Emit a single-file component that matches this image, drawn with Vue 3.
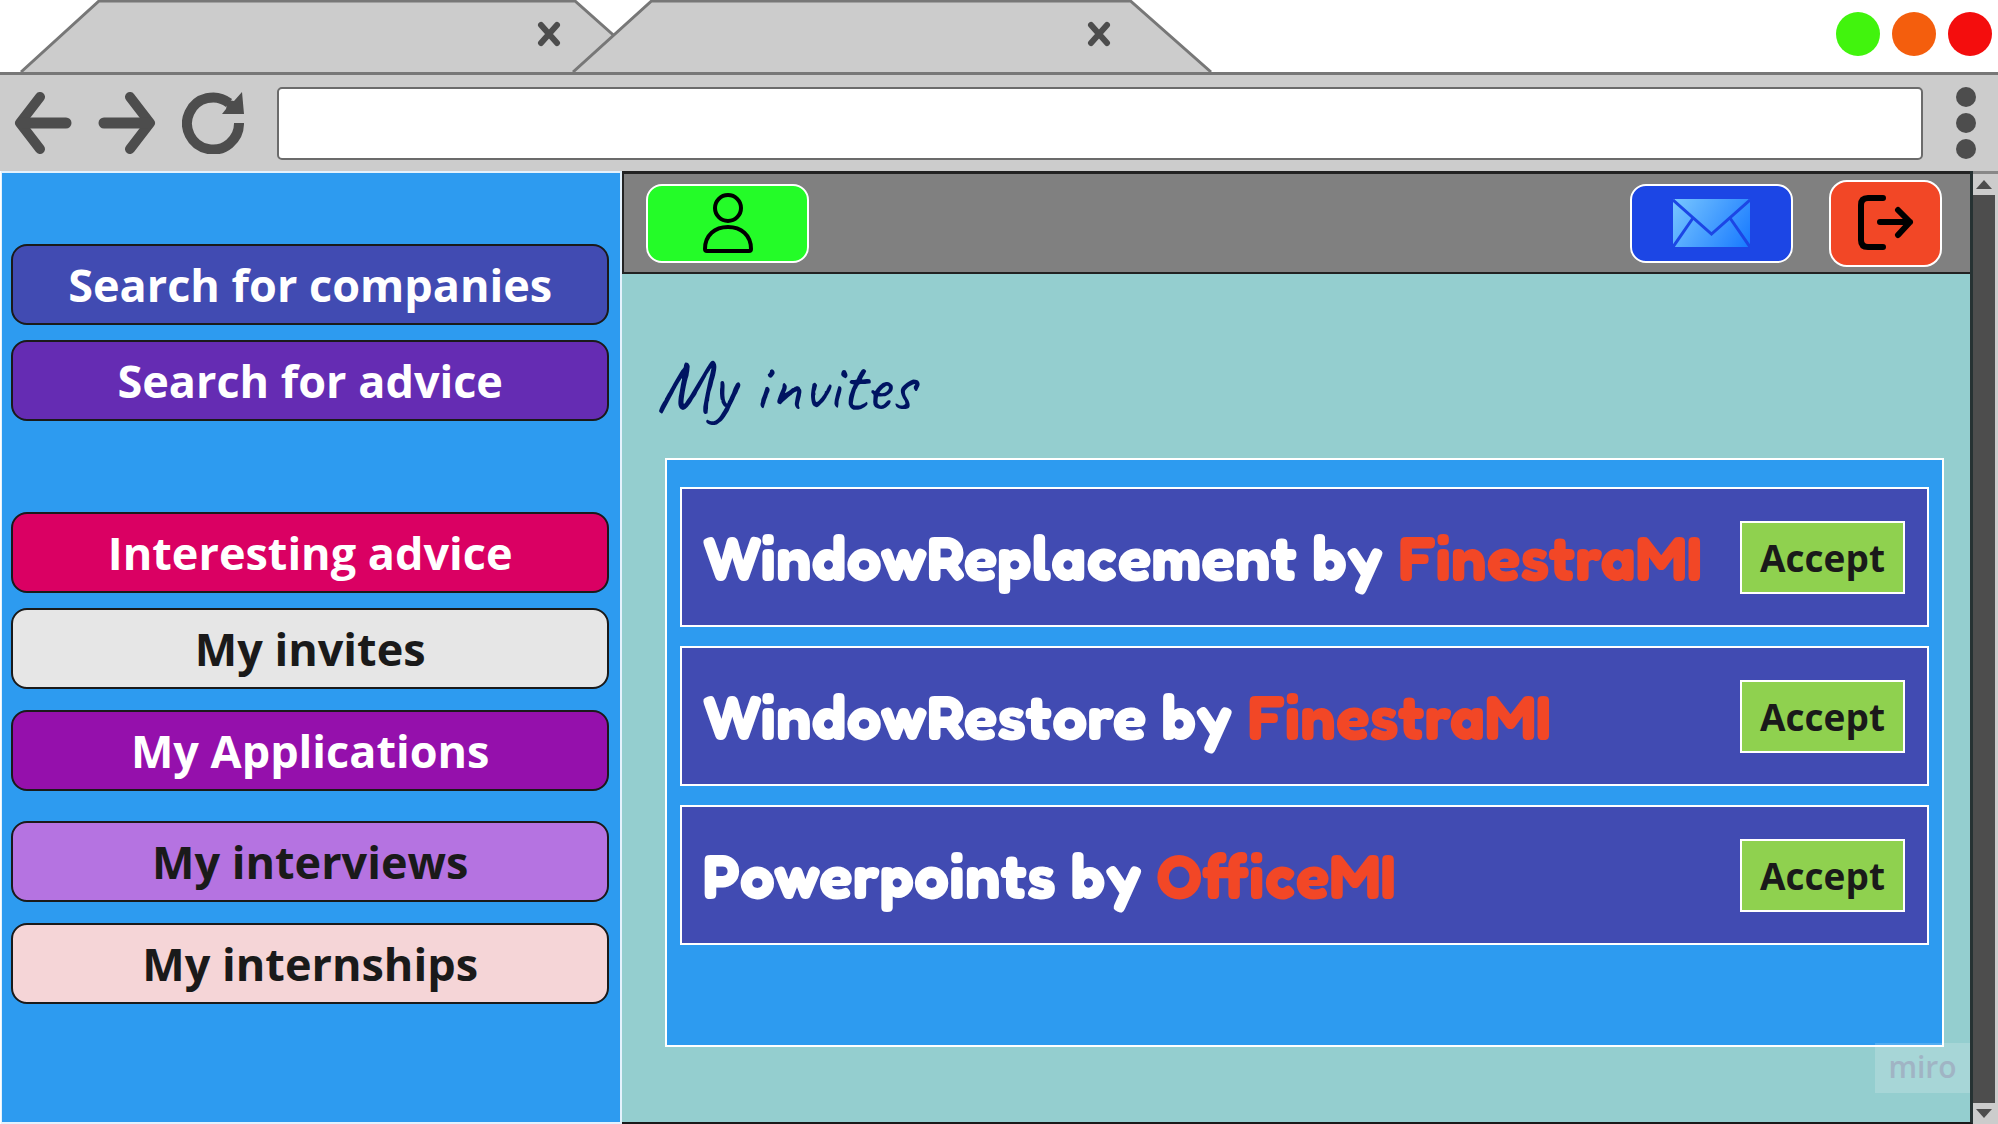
<script setup>
import { ref } from 'vue'

const address = ref('')
const tabs = [1, 2]

const links = [
  { label: 'Search for companies', tone: 'indigo' },
  { label: 'Search for advice', tone: 'violet' },
  { label: 'Interesting advice', tone: 'pink' },
  { label: 'My invites', tone: 'light' },
  { label: 'My Applications', tone: 'purple' },
  { label: 'My interviews', tone: 'lilac' },
  { label: 'My internships', tone: 'rose' },
]

const invites = [
  { title: 'WindowReplacement', company: 'FinestraMI' },
  { title: 'WindowRestore', company: 'FinestraMI' },
  { title: 'Powerpoints', company: 'OfficeMI' },
]
</script>

<template>
  <div class="browser">
    <div class="tab-strip">
      <div v-for="tab in tabs" :key="tab" class="tab">
        <svg class="tab-shape" viewBox="0 0 636 74" preserveAspectRatio="none" aria-hidden="true">
          <path d="M1 74 L79 1 H555 L635 74" fill="#ccc" stroke="#777" stroke-width="3" />
        </svg>
        <button class="tab-close" type="button" aria-label="Close tab">
          <svg width="24" height="26" viewBox="0 0 24 26">
            <path d="M4 4 L20 22 M20 4 L4 22" stroke="#4d4d4d" stroke-width="6" stroke-linecap="round" />
          </svg>
        </button>
      </div>
      <div class="window-buttons">
        <button class="dot green" type="button" aria-label="Minimize"></button>
        <button class="dot orange" type="button" aria-label="Maximize"></button>
        <button class="dot red" type="button" aria-label="Close window"></button>
      </div>
    </div>

    <div class="toolbar">
      <div class="nav-buttons">
        <button type="button" aria-label="Back">
          <svg width="58" height="62" viewBox="0 0 58 62" fill="none" stroke="#4d4d4d" stroke-linecap="round" stroke-linejoin="round">
            <path d="M26 5 L6 31 L26 57" stroke-width="10" />
            <path d="M8 31 H52" stroke-width="11" />
          </svg>
        </button>
        <button type="button" aria-label="Forward">
          <svg width="58" height="62" viewBox="0 0 58 62" fill="none" stroke="#4d4d4d" stroke-linecap="round" stroke-linejoin="round">
            <path d="M32 5 L52 31 L32 57" stroke-width="10" />
            <path d="M50 31 H6" stroke-width="11" />
          </svg>
        </button>
        <button type="button" aria-label="Reload">
          <svg width="62" height="62" viewBox="0 0 62 62">
            <path d="M57 31 A26 26 0 1 1 47 11" fill="none" stroke="#4d4d4d" stroke-width="10" />
            <path d="M60 0 L62 22 H40 L44 17 L46 8 L52 9 Z" fill="#4d4d4d" />
          </svg>
        </button>
      </div>
      <input v-model="address" class="address" type="text" aria-label="Address" />
      <button class="menu" type="button" aria-label="Menu">
        <svg width="20" height="72" viewBox="0 0 20 72" fill="#4d4d4d">
          <circle cx="10" cy="10" r="10" />
          <circle cx="10" cy="36" r="10" />
          <circle cx="10" cy="62" r="10" />
        </svg>
      </button>
    </div>

    <div class="page">
      <nav class="sidebar">
        <button v-for="link in links" :key="link.label" type="button" class="link" :class="link.tone">
          {{ link.label }}
        </button>
      </nav>

      <div class="content">
        <header class="header">
          <button class="action profile" type="button" aria-label="Profile">
            <svg width="50" height="60" viewBox="0 0 50 60" fill="none" stroke="#000" stroke-width="4">
              <circle cx="25" cy="15" r="13" />
              <path d="M2 56 C2 42 12 34 25 34 C38 34 48 42 48 56 Q48 58 46 58 H4 Q2 58 2 56 Z" />
            </svg>
          </button>
          <button class="action mail" type="button" aria-label="Messages">
            <svg width="77" height="48" viewBox="0 0 77 48">
              <defs>
                <linearGradient id="mail-fill" x1="0" y1="0" x2="77" y2="48" gradientUnits="userSpaceOnUse">
                  <stop offset="0" stop-color="#78c6ff" />
                  <stop offset="1" stop-color="#1779ff" />
                </linearGradient>
              </defs>
              <rect width="77" height="48" rx="2" fill="url(#mail-fill)" />
              <path d="M0 1 L38.5 35 L77 1 M20 19 L0 48 M57 19 L77 48" fill="none" stroke="#1c46e5" stroke-width="3" />
            </svg>
          </button>
          <button class="action logout" type="button" aria-label="Log out">
            <svg width="56" height="56" viewBox="0 0 56 56" fill="none" stroke="#000" stroke-linecap="round" stroke-linejoin="round">
              <path d="M25 3 H10 Q3 3 3 10 V45 Q3 52 10 52 H25" stroke-width="6" />
              <path d="M22 27 H52 M40 15 L52 27 L40 40" stroke-width="6" />
            </svg>
          </button>
        </header>

        <main class="main">
          <h1 class="heading">My invites</h1>
          <section class="panel">
            <article v-for="invite in invites" :key="invite.title" class="card">
              <h2 class="title">{{ invite.title }} by <span class="company">{{ invite.company }}</span></h2>
              <button class="accept" type="button">Accept</button>
            </article>
          </section>
          <div class="badge">miro</div>
        </main>
      </div>

      <div class="scrollbar">
        <button type="button" aria-label="Scroll up">
          <svg width="16" height="9" viewBox="0 0 16 9"><path d="M8 0 L16 9 H0 Z" fill="#4d4d4d" /></svg>
        </button>
        <div class="thumb"></div>
        <button type="button" aria-label="Scroll down">
          <svg width="16" height="9" viewBox="0 0 16 9"><path d="M0 0 H16 L8 9 Z" fill="#4d4d4d" /></svg>
        </button>
      </div>
    </div>
  </div>
</template>

<style>
body {
  margin: 0;
  background: #fff;
}
</style>

<style scoped>
.browser {
  display: flex;
  flex-direction: column;
  min-height: 100vh;
  font-family: "Open Sans", sans-serif;
  color: #1a1a1a;
}

.browser *,
.browser {
  box-sizing: border-box;
}

button {
  display: flex;
  align-items: center;
  justify-content: center;
  margin: 0;
  padding: 0;
  border: 0;
  background: none;
  font-family: inherit;
  color: inherit;
  cursor: pointer;
}

svg {
  display: block;
}

.tab-strip {
  display: flex;
  height: 72px;
  padding: 0 6px 0 20px;
}

.tab {
  position: relative;
  display: flex;
  align-items: center;
  justify-content: flex-end;
  width: 636px;
  padding: 0 95px 4px 0;
}

.tab + .tab {
  width: 640px;
  margin-left: -84px;
  padding-right: 101px;
}

.tab-shape {
  position: absolute;
  inset: 0;
  width: 100%;
  height: 100%;
}

.tab-close {
  position: relative;
}

.window-buttons {
  display: flex;
  align-items: center;
  gap: 12px;
  margin-left: auto;
  padding-bottom: 4px;
}

.dot {
  width: 44px;
  height: 44px;
  border-radius: 50%;
}

.green { background: #41f40d; }
.orange { background: #f45e0d; }
.red { background: #f40d0d; }

.toolbar {
  display: flex;
  align-items: center;
  gap: 33px;
  height: 99px;
  padding: 0 22px 0 14px;
  border-top: 3px solid #777;
  background: #ccc;
}

.nav-buttons {
  display: flex;
  gap: 26px;
}

.address {
  flex: 1;
  min-width: 0;
  height: 73px;
  padding: 0 16px;
  border: 2px solid #6b6b6b;
  border-radius: 5px;
  background: #fff;
  font: 32px "Open Sans", sans-serif;
  outline: none;
}

.page {
  display: flex;
  flex: 1;
}

.sidebar {
  display: flex;
  flex-direction: column;
  flex: 0 0 calc(31% + 2px);
  margin-left: 1px;
  padding: 71px 11px 24px 9px;
  border: 2px solid #e4f2fd;
  border-left-width: 1px;
  background: #2d9bf0;
}

.link {
  height: 81px;
  margin-bottom: 15px;
  border: 2px solid #1a1a1a;
  border-radius: 16px;
  font-size: 45px;
  font-weight: 700;
}

.indigo { background: #414bb2; color: #fff; }
.violet { margin-bottom: 91px; background: #652cb3; color: #fff; }
.pink { background: #da0063; color: #fff; }
.light { margin-bottom: 21px; background: #e6e6e6; }
.purple { margin-bottom: 30px; background: #9510ac; color: #fff; }
.lilac { margin-bottom: 21px; background: #b573e1; }
.rose { background: #f5d5d7; }

.content {
  display: flex;
  flex: 1;
  flex-direction: column;
  min-width: 0;
  border-right: 3px solid #263233;
  border-bottom: 2px solid #1a1a1a;
}

.header {
  display: flex;
  align-items: center;
  gap: 36px;
  height: 103px;
  padding: 0 28px 0 22px;
  border: 2px solid #222;
  border-top-width: 3px;
  border-right: 0;
  background: #808080;
}

.action {
  width: 163px;
  height: 79px;
  border: 2px solid #fff;
  border-radius: 16px;
}

.profile {
  margin-right: auto;
  background: #24fc28;
}

.mail {
  background: #1c46e5;
}

.logout {
  width: 113px;
  height: 87px;
  border-radius: 18px;
  background: #f24726;
}

.main {
  position: relative;
  display: flex;
  flex: 1;
  flex-direction: column;
  padding: 68px 26px 75px 34px;
  background: #94cecf;
}

.heading {
  margin: 0;
  padding: 0 0 28px;
  color: #001462;
  font: 400 75px/88px "Caveat", cursive;
}

.panel {
  display: flex;
  flex: 1;
  flex-direction: column;
  gap: 19px;
  margin-left: 9px;
  padding: 27px 13px 80px;
  border: 2px solid #fff;
  background: #2d9bf0;
}

.card {
  display: flex;
  align-items: center;
  justify-content: space-between;
  height: 140px;
  padding: 0 22px 0 20px;
  border: 2px solid #fff;
  background: #414bb2;
}

.title {
  margin: 0;
  color: #fff;
  font: 700 63px/80px "Fredoka", "Baloo 2", "Lato", sans-serif;
  white-space: nowrap;
}

.company {
  color: #f24726;
}

.accept {
  width: 165px;
  height: 73px;
  border: 2px solid #fff;
  background: #8fd14f;
  font-size: 37px;
  font-weight: 700;
}

.badge {
  position: absolute;
  right: 0;
  bottom: 29px;
  width: 95px;
  height: 50px;
  background: rgba(255, 255, 255, 0.18);
  color: #a0b4c4;
  font: 600 30px/48px "Open Sans", sans-serif;
  text-align: center;
}

.scrollbar {
  display: flex;
  flex-direction: column;
  width: 25px;
  padding-right: 3px;
  border-top: 3px solid #888;
  background: #ccc;
}

.scrollbar button {
  height: 21px;
}

.thumb {
  flex: 1;
  background: #4d4d4d;
}
</style>
